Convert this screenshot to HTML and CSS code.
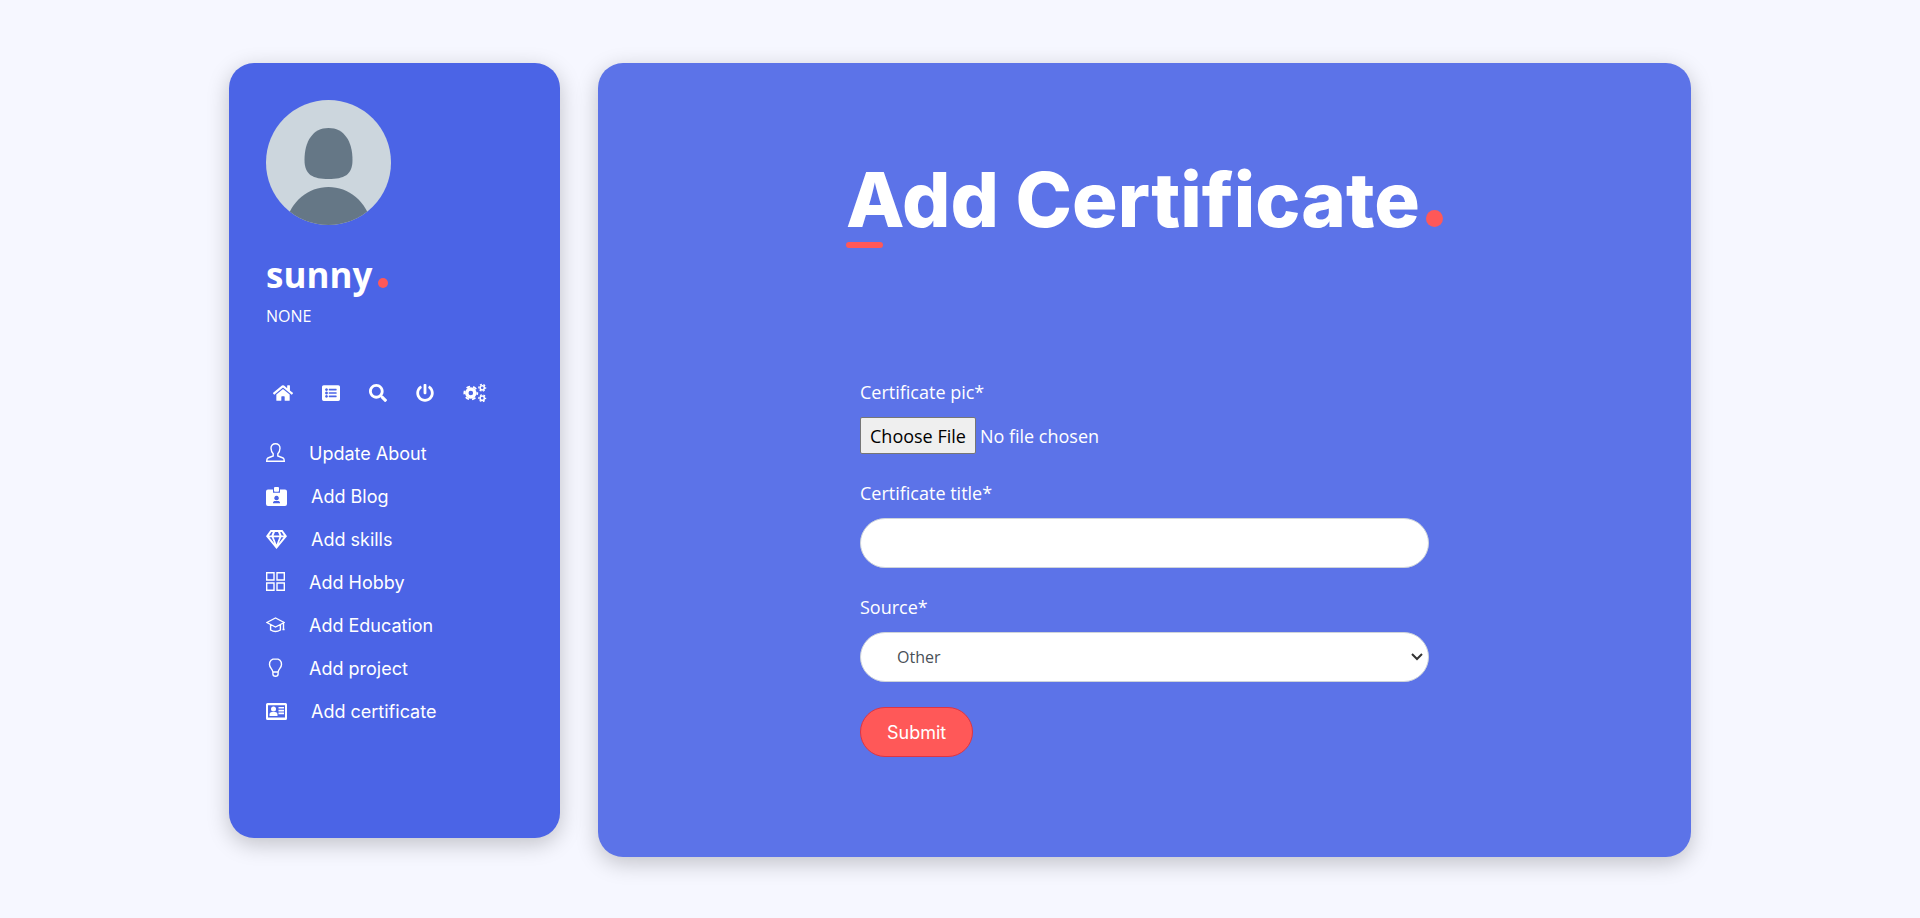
FILE: index.html
```html
<!DOCTYPE html>
<html lang="en">
<head>
<meta charset="utf-8">
<meta name="viewport" content="width=device-width, initial-scale=1">
<title>Add Certificate</title>
<link rel="stylesheet" href="styles.css">
</head>
<body>
<div class="page">
  <aside class="sidebar">
    <svg class="avatar" viewBox="0 0 125 125" role="img" aria-label="Profile picture">
      <defs><clipPath id="round"><circle cx="62.5" cy="62.5" r="62.5"/></clipPath></defs>
      <g clip-path="url(#round)">
        <rect width="125" height="125" fill="#ccd6dd"/>
        <path fill="#657786" d="M62.500 28C78 28 86.500 41 86.500 60C86.500 75 78 79 62.500 79S38.500 75 38.500 60C38.500 41 47 28 62.500 28Z"/>
        <path fill="#657786" d="M18 130C22 103 41 87 62.500 87S103 103 107 130Z"/>
      </g>
    </svg>
    <h2 class="name">sunny<span class="dot"></span></h2>
    <p class="role">NONE</p>
    <nav class="shortcuts" aria-label="Shortcuts">
      <a href="#" aria-label="Home"><svg width="20" height="18" viewBox="0 0 576 512"><path d="M280.370 148.260L96 300.110V464a16 16 0 0 0 16 16l112.060-.29a16 16 0 0 0 15.920-16V368a16 16 0 0 1 16-16h64a16 16 0 0 1 16 16v95.640a16 16 0 0 0 16 16.050L464 480a16 16 0 0 0 16-16V300L295.670 148.260a12.190 12.190 0 0 0-15.300 0zM571.600 251.470L488 182.560V44.050a12 12 0 0 0-12-12h-56a12 12 0 0 0-12 12v72.610L318.470 43a48 48 0 0 0-61 0L4.340 251.470a12 12 0 0 0-1.600 16.900l25.500 31A12 12 0 0 0 45.150 301l235.220-193.740a12.190 12.190 0 0 1 15.300 0L530.900 301a12 12 0 0 0 16.900-1.600l25.500-31a12 12 0 0 0-1.700-16.930z"/></svg></a>
      <a href="#" aria-label="List"><svg width="18" height="18" viewBox="0 0 512 512"><path fill-rule="evenodd" d="M48 32H464a48 48 0 0 1 48 48V432a48 48 0 0 1-48 48H48a48 48 0 0 1-48-48V80a48 48 0 0 1 48-48ZM128 120a40 40 0 1 0 .1 0ZM128 216a40 40 0 1 0 .1 0ZM128 312a40 40 0 1 0 .1 0ZM204 136h200a12 12 0 0 1 12 12v24a12 12 0 0 1-12 12H204a12 12 0 0 1-12-12v-24a12 12 0 0 1 12-12ZM204 232h200a12 12 0 0 1 12 12v24a12 12 0 0 1-12 12H204a12 12 0 0 1-12-12v-24a12 12 0 0 1 12-12ZM204 328h200a12 12 0 0 1 12 12v24a12 12 0 0 1-12 12H204a12 12 0 0 1-12-12v-24a12 12 0 0 1 12-12Z"/></svg></a>
      <a href="#" aria-label="Search"><svg width="18" height="18" viewBox="0 0 512 512"><path d="M505 442.700L405.300 343c-4.500-4.500-10.600-7-17-7H372c27.600-35.300 44-79.700 44-128C416 93.100 322.900 0 208 0S0 93.100 0 208s93.100 208 208 208c48.300 0 92.700-16.400 128-44v16.300c0 6.400 2.500 12.500 7 17l99.700 99.700c9.400 9.400 24.600 9.400 33.900 0l28.300-28.300c9.400-9.400 9.400-24.600.1-34zM208 336c-70.700 0-128-57.200-128-128 0-70.700 57.200-128 128-128 70.700 0 128 57.200 128 128 0 70.700-57.200 128-128 128z"/></svg></a>
      <a href="#" aria-label="Log out"><svg width="18" height="18" viewBox="0 0 512 512"><path d="M400 54.100c63 45 104 118.600 104 201.900 0 136.800-110.800 247.700-247.500 248C120 504.300 8.200 393 8 256.400 7.900 173.100 48.900 99.300 111.800 54.200c11.700-8.300 28-4.800 35 7.700L162.600 90c5.900 10.500 3.100 23.800-6.600 31-41.500 30.800-68 79.600-68 134.900-.1 92.300 74.500 168.100 168 168.100 91.600 0 168.600-74.200 168-169.100-.3-51.800-24.700-101.800-68.100-134-9.700-7.200-12.400-20.500-6.500-30.900l15.800-28.100c7-12.400 23.200-16.100 34.800-7.800zM296 264V24c0-13.300-10.700-24-24-24h-32c-13.300 0-24 10.700-24 24v240c0 13.300 10.700 24 24 24h32c13.300 0 24-10.700 24-24z"/></svg></a>
      <a href="#" aria-label="Settings"><svg class="gears" width="23" height="18" viewBox="0 0 640 512"><circle cx="215" cy="256" r="115" stroke-width="100"/><circle cx="215" cy="256" r="185" stroke-width="50" stroke-dasharray="105 88.7" stroke-dashoffset="52"/><circle cx="540" cy="108" r="60" stroke-width="44"/><circle cx="540" cy="108" r="96" stroke-width="36" stroke-dasharray="56 44.5" stroke-dashoffset="28"/><circle cx="540" cy="404" r="60" stroke-width="44"/><circle cx="540" cy="404" r="96" stroke-width="36" stroke-dasharray="56 44.5" stroke-dashoffset="28"/></svg></a>
    </nav>
    <ul class="menu">
      <li><a href="#"><svg class="line" width="19" height="21" viewBox="0 0 19 21"><path d="M9.500.7C6.700.7 4.900 2.400 5 5.300C5.100 7.900 5.800 9.400 7.200 10.800V13L1.900 15C.9 15.500.7 16.500.7 18.300H18.300C18.300 16.500 18.100 15.500 17.100 15L11.800 13V10.800C13.200 9.400 13.900 7.900 14 5.300C14.100 2.400 12.300.7 9.500.7Z"/></svg>Update About</a></li>
      <li><a href="#"><svg width="21" height="19" viewBox="0 0 21 19"><path fill-rule="evenodd" d="M2 2.500H7V5.800H14V2.500H19A2 2 0 0 1 21 4.500V17A2 2 0 0 1 19 19H2A2 2 0 0 1 0 17V4.500A2 2 0 0 1 2 2.500ZM10.500 8.700A2.300 2.300 0 1 0 10.600 8.700ZM7 16.200H14V15.600C14 14.500 13 14 12 14H9C8 14 7 14.500 7 15.600Z"/><rect x="8" width="5" height="4.800" rx="1"/></svg>Add Blog</a></li>
      <li><a href="#"><svg width="21" height="19" viewBox="0 0 21 19"><path fill-rule="evenodd" d="M4.500 0H16.500L21 6.200L10.500 19L0 6.200ZM5.400 2L3 5.400H5.400L6.800 2ZM9 2L7.500 5.400H13.500L12 2ZM14.200 2L15.600 5.400H18L15.600 2ZM3.400 7.200L8.400 13.500L5.700 7.200ZM7.700 7.200L10.500 14.500L13.300 7.200ZM15.300 7.200L12.600 13.500L17.600 7.200Z"/></svg>Add skills</a></li>
      <li><a href="#"><svg class="line" width="19" height="21" viewBox="0 0 19 21"><path d="M.7.700H8V8H.7ZM11 .7H18.300V8H11ZM.7 11H8V18.300H.7ZM11 11H18.300V18.300H11Z"/></svg>Add Hobby</a></li>
      <li><a href="#"><svg class="line" width="19" height="21" viewBox="0 0 19 21"><path d="M.8 7.500L9.500 3L18.200 7.500L9.500 12ZM4.600 9.500V15C7.800 16.900 11.200 16.900 14.400 15V9.500M17.500 8V13.800M16.500 14.500H18.600"/></svg>Add Education</a></li>
      <li><a href="#"><svg class="line" width="19" height="21" viewBox="0 0 19 21"><path d="M9.500.7C5.700.7 3.500 3.200 3.500 6.400C3.500 9.600 6.300 10.600 6.900 14H12.100C12.700 10.600 15.500 9.600 15.500 6.400C15.500 3.200 13.300.7 9.500.7ZM6.900 14V16C6.900 17.600 8 18.300 9.500 18.300S12.100 17.600 12.100 16V14"/></svg>Add project</a></li>
      <li><a href="#"><svg width="21" height="17" viewBox="0 0 21 17"><path fill-rule="evenodd" d="M1.500 0H19.500A1.500 1.500 0 0 1 21 1.500V15.500A1.500 1.500 0 0 1 19.500 17H1.500A1.500 1.500 0 0 1 0 15.500V1.500A1.500 1.500 0 0 1 1.500 0ZM2 2.200V14.500H19V2.200Z"/><circle cx="7.500" cy="6" r="2.500"/><path d="M3.500 13V11.500Q3.500 9 6 9H9Q11.500 9 11.500 11.500V13ZM12.500 4H18V5.600H12.500ZM12.500 6.800H18V8.400H12.500ZM12.500 9.600H18V11.200H12.500Z"/></svg>Add certificate</a></li>
    </ul>
  </aside>
  <main class="panel">
    <h1 class="title">Add Certificate<span class="dot"></span></h1>
    <form class="form">
      <div class="field">
        <label for="pic">Certificate pic*</label>
        <input class="file" type="file" id="pic">
      </div>
      <div class="field">
        <label for="cert-title">Certificate title*</label>
        <input class="control" type="text" id="cert-title">
      </div>
      <div class="field">
        <label for="source">Source*</label>
        <select class="control" id="source"><option>Other</option></select>
      </div>
      <button class="submit" type="button">Submit</button>
    </form>
  </main>
</div>
</body>
</html>
```
FILE: styles.css
```css
* { box-sizing: border-box; }

body {
  margin: 0;
  background: #f6f7ff;
  color: #fff;
  font-family: "Open Sans", "Noto Sans", sans-serif;
}

.page {
  display: grid;
  grid-template-columns: 331px minmax(0, 1fr);
  gap: 38px;
  align-items: start;
  max-width: 1462px;
  margin: 0 auto;
  padding: 63px 0 60px;
}

.sidebar,
.panel {
  border-radius: 25px;
  box-shadow: 0 6px 22px rgba(0, 0, 0, 0.22);
}

.sidebar {
  padding: 37px 37px 105px;
  background: #4b64e6;
}

.avatar {
  display: block;
  width: 125px;
  height: 125px;
}

.dot {
  display: inline-block;
  border-radius: 50%;
  background: #ff5858;
}

.name {
  margin: 27px 0 0;
  font-size: 35px;
  line-height: 46px;
  font-weight: 700;
}

.name .dot {
  width: 10px;
  height: 10px;
  margin-left: 6px;
}

.role {
  margin: 6px 0 0;
  font-size: 16px;
  line-height: 24px;
}

.shortcuts {
  display: flex;
  align-items: center;
  gap: 29px;
  margin-top: 56px;
  padding-left: 7px;
}

.shortcuts a { display: flex; }

svg { fill: #fff; flex: none; }

.line {
  fill: none;
  stroke: #fff;
  stroke-width: 1.4;
}

.gears {
  fill: none;
  stroke: #fff;
  overflow: visible;
}

.menu {
  margin: 30px 0 0;
  padding: 0;
  list-style: none;
}

.menu a {
  display: flex;
  align-items: center;
  gap: 24px;
  height: 43px;
  color: #fff;
  font: 18px "Inter", sans-serif;
  text-decoration: none;
}

.panel {
  padding: 80px 40px 100px;
  background: #5c73e8;
}

.title {
  position: relative;
  width: fit-content;
  margin: 0 auto;
  font: 800 76px/112px "Inter", sans-serif;
}

.title::after {
  content: "";
  position: absolute;
  left: 0;
  bottom: 7px;
  width: 37px;
  height: 6px;
  border-radius: 3px;
  background: #ff5858;
}

.title .dot {
  width: 17px;
  height: 17px;
  margin-left: 6px;
}

.form {
  max-width: 569px;
  margin: 123px auto 0;
}

.field { margin-bottom: 25px; }

.field label {
  display: block;
  margin-bottom: 11px;
  font-size: 18px;
  line-height: 28px;
}

.file {
  display: block;
  width: 100%;
  height: 37px;
  color: #fff;
  font: 18px/28px "Open Sans", "Noto Sans", sans-serif;
}

.file::file-selector-button {
  height: 37px;
  margin: 0 4px 0 0;
  padding: 0 9px;
  border: 1px solid #767676;
  border-radius: 2px;
  background: #efefef;
  color: #000;
  font: inherit;
}

.control {
  display: block;
  width: 100%;
  height: 50px;
  padding: 0 36px;
  border: 1px solid #ced4da;
  border-radius: 25px;
  background: #fff;
  color: #495057;
  font: 16px "Open Sans", "Noto Sans", sans-serif;
}

select.control {
  appearance: none;
  background: #fff url("data:image/svg+xml,%3Csvg xmlns='http://www.w3.org/2000/svg' width='12' height='8'%3E%3Cpath d='M1 1l5 5 5-5' fill='none' stroke='%23333' stroke-width='2'/%3E%3C/svg%3E") no-repeat right 5px center;
}

.submit {
  height: 50px;
  padding: 0 26px;
  border: 1px solid #dc3545;
  border-radius: 25px;
  background: #ff5858;
  color: #fff;
  font: 18px "Inter", sans-serif;
}
```
